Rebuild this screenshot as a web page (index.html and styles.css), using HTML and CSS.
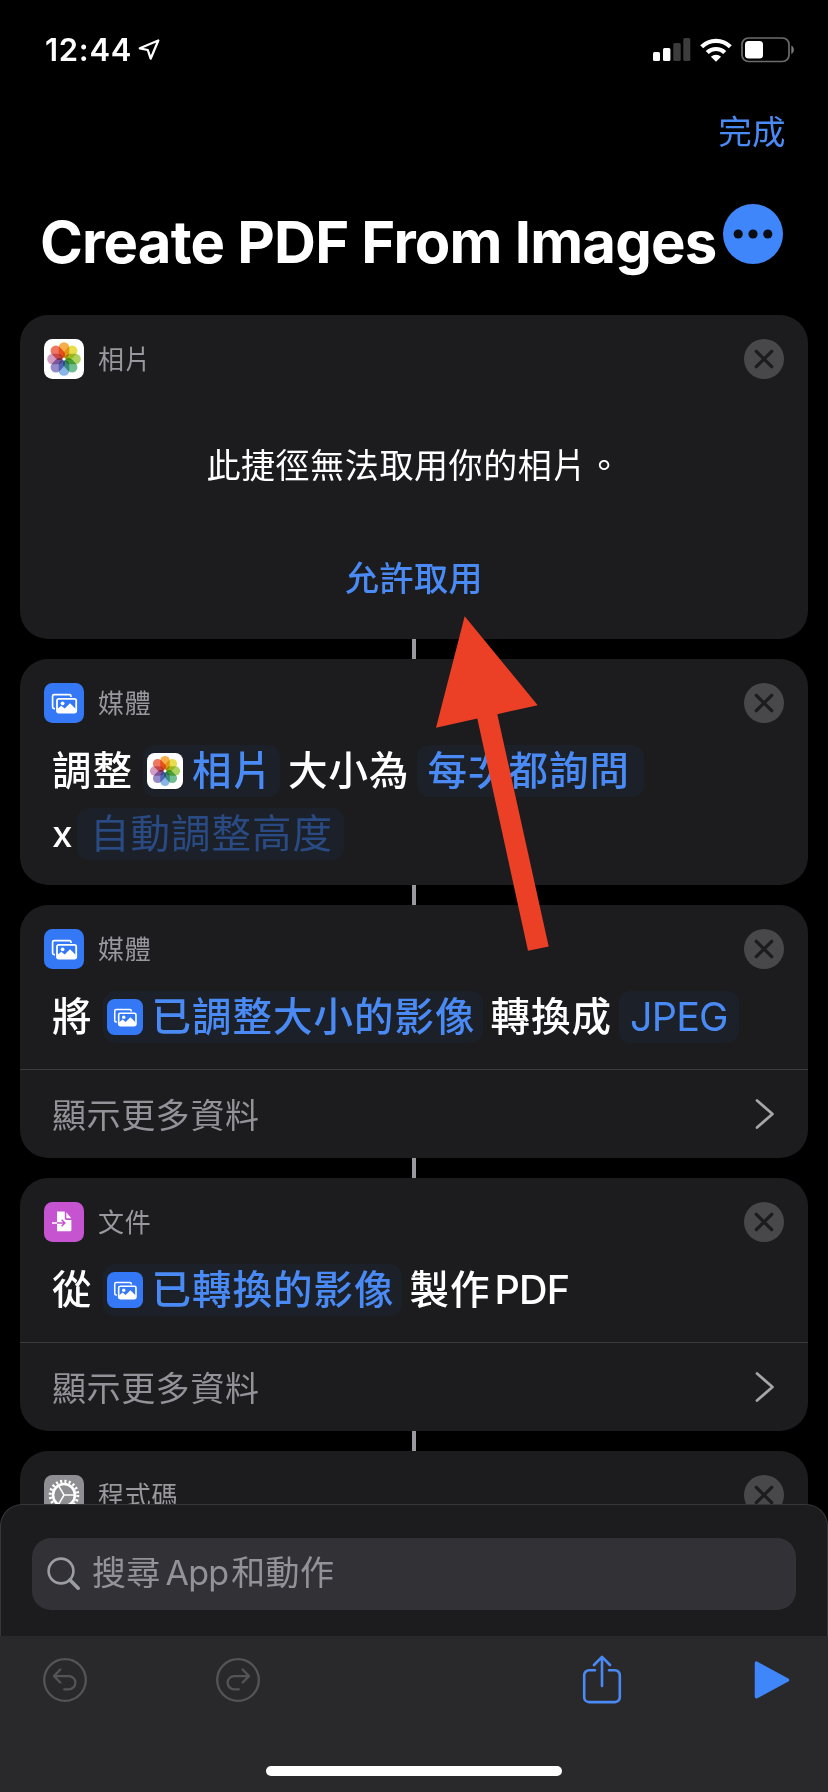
FILE: index.html
```html
<!DOCTYPE html>
<html lang="zh-Hant">
<head>
<meta charset="utf-8">
<title>Create PDF From Images</title>
<link rel="stylesheet" href="styles.css">
</head>
<body>
<svg class="defs" aria-hidden="true">
  <defs>
    <symbol id="photos" viewBox="0 0 40 40">
      <rect width="40" height="40" rx="8.5" fill="#fff"/>
      <g class="petals">
        <rect x="14.7" y="3.2" width="10.6" height="16" rx="5.3" fill="#f7a63a"/>
        <rect x="14.7" y="3.2" width="10.6" height="16" rx="5.3" fill="#e6dc3c" transform="rotate(45 20 20)"/>
        <rect x="14.7" y="3.2" width="10.6" height="16" rx="5.3" fill="#a5cf52" transform="rotate(90 20 20)"/>
        <rect x="14.7" y="3.2" width="10.6" height="16" rx="5.3" fill="#62b985" transform="rotate(135 20 20)"/>
        <rect x="14.7" y="3.2" width="10.6" height="16" rx="5.3" fill="#7eb0e4" transform="rotate(180 20 20)"/>
        <rect x="14.7" y="3.2" width="10.6" height="16" rx="5.3" fill="#8e80c4" transform="rotate(225 20 20)"/>
        <rect x="14.7" y="3.2" width="10.6" height="16" rx="5.3" fill="#cf94bd" transform="rotate(270 20 20)"/>
        <rect x="14.7" y="3.2" width="10.6" height="16" rx="5.3" fill="#ee6a55" transform="rotate(315 20 20)"/>
      </g>
      <circle cx="20" cy="20" r="1.6" fill="#fff"/>
    </symbol>
    <symbol id="media" viewBox="0 0 40 40">
      <rect width="40" height="40" rx="8.5" fill="#3478f6"/>
      <path d="M11 25.6h-.8a1.6 1.6 0 0 1-1.6-1.6V13.3a1.6 1.6 0 0 1 1.6-1.6h15.2a1.6 1.6 0 0 1 1.6 1.6v.7" fill="none" stroke="#fff" stroke-width="1.7"/>
      <rect x="13" y="15.8" width="19.2" height="13.8" rx="1.8" fill="none" stroke="#fff" stroke-width="1.8"/>
      <circle cx="18.6" cy="20.3" r="1.9" fill="#fff"/>
      <path d="M13.5 29v-3.2l3.8-3 3.4 2.7 5.3-5.2 5.8 5.7v3z" fill="#fff"/>
    </symbol>
    <symbol id="close" viewBox="0 0 40 40">
      <circle cx="20" cy="20" r="20" fill="#48484b"/>
      <path d="M12.3 12.3l15.4 15.4M27.7 12.3L12.3 27.7" stroke="#1c1c1e" stroke-width="3.3" stroke-linecap="round"/>
    </symbol>
    <symbol id="chevron" viewBox="0 0 20 32">
      <path d="M2 2.5L17.5 16 2 29.5" fill="none" stroke="#a5a5aa" stroke-width="2.7" stroke-linecap="round" stroke-linejoin="round"/>
    </symbol>
  </defs>
</svg>

<div class="screen">
  <header class="status">
    <div class="clock">
      <span class="time">12:44</span>
      <svg width="22" height="22" viewBox="0 0 22 22"><path d="M20.3 1.5L1.8 9.3l8 1.7 2.9 8.6z" fill="none" stroke="#fff" stroke-width="2.3" stroke-linejoin="round"/></svg>
    </div>
    <div class="indicators">
      <svg width="38" height="24" viewBox="0 0 38 24"><rect x="0" y="14" width="7" height="9" rx="1.5" fill="#fff"/><rect x="10" y="10" width="7.4" height="13" rx="1.5" fill="#fff"/><rect x="20.3" y="5" width="7.4" height="18" rx="1.5" fill="#3c3c3c"/><rect x="30.3" y="0" width="7" height="23" rx="1.5" fill="#3c3c3c"/></svg>
      <svg width="32" height="24" viewBox="0 0 32 24"><g fill="none" stroke="#fff" stroke-width="4.2"><path d="M1.7 8.8a20.3 20.3 0 0 1 28.6 0"/><path d="M7.2 14.6a12.6 12.6 0 0 1 17.6 0"/></g><path d="M10.9 18.7a7.4 7.4 0 0 1 10.2 0L16 23.7z" fill="#fff"/></svg>
      <svg width="54" height="26" viewBox="0 0 54 26"><rect x="1" y="1" width="47" height="23.5" rx="6.5" fill="none" stroke="#6c6c6c" stroke-width="1.7"/><rect x="4" y="4" width="18" height="17.5" rx="3.5" fill="#fff"/><path d="M50.3 8.5c3.4 1.4 3.4 7 0 8.4z" fill="#7a7a7a"/></svg>
    </div>
  </header>

  <nav class="navbar"><a class="done">完成</a></nav>

  <div class="title-row">
    <h1 class="title">Create PDF From Images</h1>
    <svg class="more" width="60" height="60" viewBox="0 0 60 60"><circle cx="30" cy="30" r="30" fill="#3f86fa"/><g fill="#0a0d14"><circle cx="15.2" cy="30" r="4.6"/><circle cx="30" cy="30" r="4.6"/><circle cx="44.8" cy="30" r="4.6"/></g></svg>
  </div>

  <main class="actions">
    <section class="card access">
      <div class="card-head">
        <svg class="app"><use href="#photos"/></svg>
        <span class="app-name">相片</span>
        <svg class="close"><use href="#close"/></svg>
      </div>
      <p class="message">此捷徑無法取用你的相片。</p>
      <a class="allow">允許取用</a>
    </section>
    <div class="link"></div>

    <section class="card resize">
      <div class="card-head">
        <svg class="app"><use href="#media"/></svg>
        <span class="app-name">媒體</span>
        <svg class="close"><use href="#close"/></svg>
      </div>
      <div class="sentence">
        <span class="word">調整</span>
        <span class="chip with-icon"><svg class="mini"><use href="#photos"/></svg>相片</span>
        <span class="word">大小為</span>
        <span class="chip ask">每次都詢問</span>
      </div>
      <div class="sentence second">
        <span class="word times">x</span>
        <span class="chip placeholder">自動調整高度</span>
      </div>
    </section>
    <div class="link"></div>

    <section class="card">
      <div class="card-head">
        <svg class="app"><use href="#media"/></svg>
        <span class="app-name">媒體</span>
        <svg class="close"><use href="#close"/></svg>
      </div>
      <div class="sentence">
        <span class="word">將</span>
        <span class="chip with-icon"><svg class="mini"><use href="#media"/></svg>已調整大小的影像</span>
        <span class="word">轉換成</span>
        <span class="chip format">JPEG</span>
      </div>
      <div class="more-row"><span>顯示更多資料</span><svg class="chev"><use href="#chevron"/></svg></div>
    </section>
    <div class="link"></div>

    <section class="card">
      <div class="card-head">
        <svg class="app" viewBox="0 0 40 40"><rect width="40" height="40" rx="8.5" fill="#c653cf"/><path d="M13 9.5h7.8v6.8a1.6 1.6 0 0 0 1.6 1.6h5V28a1.2 1.2 0 0 1-1.2 1.2H13z" fill="#fff"/><path d="M22.3 10.2l5 6h-5z" fill="#fff"/><path d="M8 21h5" stroke="#fff" stroke-width="1.6"/><path d="M13 21h7.8m-3.2-3.3l3.3 3.3-3.3 3.3" fill="none" stroke="#c653cf" stroke-width="1.5"/></svg>
        <span class="app-name">文件</span>
        <svg class="close"><use href="#close"/></svg>
      </div>
      <div class="sentence">
        <span class="word">從</span>
        <span class="chip with-icon"><svg class="mini"><use href="#media"/></svg>已轉換的影像</span>
        <span class="word">製作<span class="latin">PDF</span></span>
      </div>
      <div class="more-row"><span>顯示更多資料</span><svg class="chev"><use href="#chevron"/></svg></div>
    </section>
    <div class="link"></div>

    <section class="card">
      <div class="card-head">
        <svg class="app" viewBox="0 0 40 40"><rect width="40" height="40" rx="8.5" fill="#8e8e93"/><circle cx="20" cy="20" r="13.8" fill="none" stroke="#fff" stroke-width="3" stroke-dasharray="2.1 2.235"/><circle cx="20" cy="20" r="11" fill="none" stroke="#fff" stroke-width="2.6"/><path d="M20 20h11M20 20l-5.500-9.500M20 20l-5.500 9.500" stroke="#fff" stroke-width="1.5"/></svg>
        <span class="app-name">程式碼</span>
        <svg class="close"><use href="#close"/></svg>
      </div>
    </section>
  </main>

  <footer class="dock">
    <div class="sheet">
      <div class="search">
        <svg width="34" height="34" viewBox="0 0 34 34"><circle cx="14" cy="14" r="12.4" fill="none" stroke="#9c9ca3" stroke-width="2.6"/><path d="M23 23l8.200 8.200" stroke="#9c9ca3" stroke-width="3.6" stroke-linecap="round"/></svg>
        <span class="hint">搜尋<span class="app-word">App</span>和動作</span>
      </div>
    </div>
    <div class="toolbar">
      <svg width="44" height="44" viewBox="0 0 44 44"><g fill="none" stroke="#545457" stroke-width="2.3" stroke-linecap="round" stroke-linejoin="round"><circle cx="22" cy="22" r="20.8"/><path d="M17.300 11.500l-6.300 6.600 6.300 6.400M11.500 18.100h14.300a6.600 6.600 0 0 1 0 13.200h-4.600"/></g></svg>
      <svg class="redo" width="44" height="44" viewBox="0 0 44 44"><g fill="none" stroke="#545457" stroke-width="2.3" stroke-linecap="round" stroke-linejoin="round"><circle cx="22" cy="22" r="20.8"/><path d="M26.700 11.500l6.300 6.600-6.300 6.400M32.500 18.100H18.200a6.600 6.600 0 0 0 0 13.200h4.600"/></g></svg>
      <svg class="share" width="40" height="50" viewBox="0 0 40 50"><g fill="none" stroke="#4a8af4" stroke-width="2.6" stroke-linecap="round" stroke-linejoin="round"><path d="M13 15.300H7a4.800 4.800 0 0 0-4.800 4.800v22.200a4.800 4.800 0 0 0 4.800 4.800h26a4.800 4.800 0 0 0 4.800-4.800V20.100a4.800 4.800 0 0 0-4.800-4.800H27"/><path d="M20 31V2M12 10l8-8.200L28 10"/></g></svg>
      <svg width="36" height="40" viewBox="0 0 36 40"><path d="M2.500 3.200v33.600L33.500 20z" fill="#3f86fa" stroke="#3f86fa" stroke-width="3.5" stroke-linejoin="round"/></svg>
    </div>
    <div class="home"></div>
  </footer>

  <svg class="pointer" width="113" height="335" viewBox="436 615.5 113 335"><path d="M464.700 615.700L537.700 704.700 497.300 713.700 548.700 946 528 950.300 477.300 718 436 727.300z" fill="#eb4026"/></svg>
</div>
</body>
</html>
```
FILE: styles.css
```css
* { box-sizing: border-box; }

body {
  margin: 0;
  background: #000;
  color: #fff;
  font-family: Inter, "Noto Sans CJK TC", sans-serif;
}

.defs { position: absolute; width: 0; height: 0; }
.petals rect { mix-blend-mode: multiply; opacity: .92; }

.screen {
  position: relative;
  display: flex;
  flex-direction: column;
  width: 828px;
  height: 1792px;
  overflow: hidden;
}

.status {
  display: flex;
  flex: none;
  justify-content: space-between;
  align-items: center;
  height: 100px;
  padding: 0 33px 0 45px;
}
.clock { display: flex; align-items: center; gap: 6px; }
.time { font-size: 31px; font-weight: 600; line-height: 40px; letter-spacing: .7px; }
.indicators { display: flex; align-items: center; gap: 9px; }

.navbar {
  display: flex;
  flex: none;
  justify-content: flex-end;
  align-items: center;
  height: 64px;
  padding-right: 42px;
}
.done { color: #4a8af4; font-size: 33.5px; line-height: 50px; letter-spacing: .4px; }

.title-row {
  display: flex;
  flex: none;
  height: 151px;
  padding: 40px 45px 0 40px;
  justify-content: space-between;
}
.title {
  margin: 0;
  padding-top: 3px;
  font-size: 58px;
  font-weight: 700;
  line-height: 70px;
  letter-spacing: -.8px;
  white-space: nowrap;
}
.more { flex: none; }

.actions { flex: none; height: 1189px; padding: 0 20px; overflow: hidden; }
.card {
  height: 253px;
  border-radius: 28px;
  background: #1c1c1e;
}
.card.access { height: 324px; text-align: center; }
.card.resize { height: 226px; }
.link { width: 4px; height: 20px; margin: 0 auto; background: #98989d; }

.card-head { display: flex; align-items: center; height: 64px; padding: 24px 24px 0; }
.app, .close { flex: none; width: 40px; height: 40px; }
.app-name {
  flex: 1;
  margin-left: 14px;
  padding-top: 1px;
  color: #98989e;
  font-size: 26px;
  line-height: 39px;
  letter-spacing: .7px;
  text-align: left;
}

.message { margin: 62px 0 0; font-size: 34px; line-height: 50px; letter-spacing: .6px; }
.allow {
  display: block;
  margin-top: 63px;
  color: #4a8af4;
  font-size: 34px;
  font-weight: 500;
  line-height: 50px;
  letter-spacing: .5px;
}

.sentence {
  display: flex;
  align-items: center;
  height: 52px;
  margin-top: 22px;
  padding-left: 32px;
  font-size: 39.5px;
  font-weight: 500;
  line-height: 52px;
  letter-spacing: 1px;
  white-space: nowrap;
}
.sentence.second { margin-top: 11px; }
.chip {
  display: flex;
  align-items: center;
  height: 52px;
  margin: 0 8px 0 7px;
  padding: 0 11px;
  border-radius: 12px;
  background: #1c2029;
  color: #4a8af4;
}
.chip.with-icon { margin-left: 10px; padding: 0 7px 0 4px; }
.mini { flex: none; width: 36px; height: 36px; margin-right: 9px; }
.chip.ask { padding-right: 14px; }
.chip.placeholder { padding: 0 11px 0 13px; color: #294a82; font-weight: 400; }
.times { width: 18px; font-size: 37px; letter-spacing: 0; }
.chip.format { letter-spacing: -.8px; font-weight: 400; }
.latin { margin-left: 4px; letter-spacing: -.8px; }

.more-row {
  display: flex;
  align-items: center;
  justify-content: space-between;
  height: 89px;
  margin-top: 26px;
  padding: 3px 33px 0 32px;
  border-top: 1px solid #3b3b3e;
  color: #929298;
  font-size: 34px;
  line-height: 50px;
  letter-spacing: .6px;
}
.chev { width: 20px; height: 32px; margin-bottom: 4px; }

.dock { display: flex; flex: none; flex-direction: column; height: 288px; background: #000; }
.sheet {
  flex: none;
  height: 132px;
  padding: 33px 31px 0;
  border: 1px solid #37373a;
  border-bottom: 0;
  border-radius: 22px 22px 0 0;
  background: #1c1c1f;
}
.search {
  display: flex;
  align-items: center;
  height: 72px;
  padding-left: 15px;
  border-radius: 19px;
  background: #323236;
}
.search svg { margin-bottom: 1px; }
.hint {
  margin: 0 0 2px 11px;
  color: #929298;
  font-size: 34px;
  line-height: 50px;
  letter-spacing: .3px;
  white-space: nowrap;
}
.app-word { margin: 0 3px 0 5px; letter-spacing: -.8px; }

.toolbar {
  display: flex;
  flex: none;
  align-items: center;
  height: 130px;
  padding: 0 38px 42px 43px;
  background: #29292b;
}
.redo { margin-left: 129px; }
.share { margin-left: 322px; }
.share + svg { margin-left: auto; }

.home { flex: 1; background: #29292b; }
.home::before {
  content: "";
  display: block;
  width: 296px;
  height: 10px;
  margin: 0 auto;
  border-radius: 5px;
  background: #fff;
}

.pointer { position: absolute; left: 436px; top: 615.5px; }
```
